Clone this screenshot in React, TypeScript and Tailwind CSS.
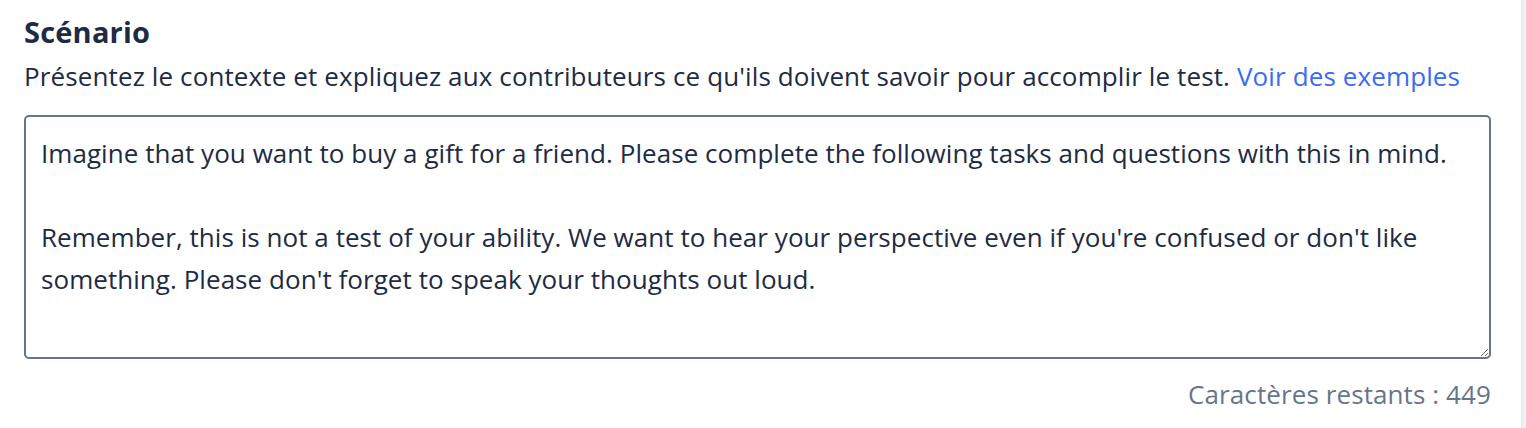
const scenario =
  "Imagine that you want to buy a gift for a friend. Please complete the following tasks and questions with this in mind.\n\nRemember, this is not a test of your ability. We want to hear your perspective even if you're confused or don't like something. Please don't forget to speak your thoughts out loud.";

export default function App() {
  return (
    <div className="flex h-[428px] w-full bg-white font-['Open_Sans',sans-serif] text-[#1d2b45]">
      <div className="flex-1 pl-6 pr-[30px] pt-[12px]">
        <h2 className="text-[29px] font-bold leading-[40px] tracking-[0.2px]">Scénario</h2>
        <p className="mt-[6px] text-[26px] leading-[36px] tracking-[0.12px]">
          Présentez le contexte et expliquez aux contributeurs ce qu'ils doivent savoir pour accomplir le test.{" "}
          <a href="#" className="text-[#3a6bf5]">
            Voir des exemples
          </a>
        </p>
        <textarea
          readOnly
          defaultValue={scenario}
          className="mt-[21px] block h-[244px] w-full rounded-[5px] border-2 border-[#66758b] px-[15px] pt-[15px] text-[26px] leading-[42px] tracking-[0.05px] text-[#1d2b45] outline-none"
        />
        <p className="mt-[17px] text-right text-[26px] leading-[36px] tracking-[0.1px] text-[#66758b]">
          Caractères restants : 449
        </p>
      </div>
      <div className="w-[5px] border-l border-[#e3e6eb] bg-[#eef0f3]" />
    </div>
  );
}
